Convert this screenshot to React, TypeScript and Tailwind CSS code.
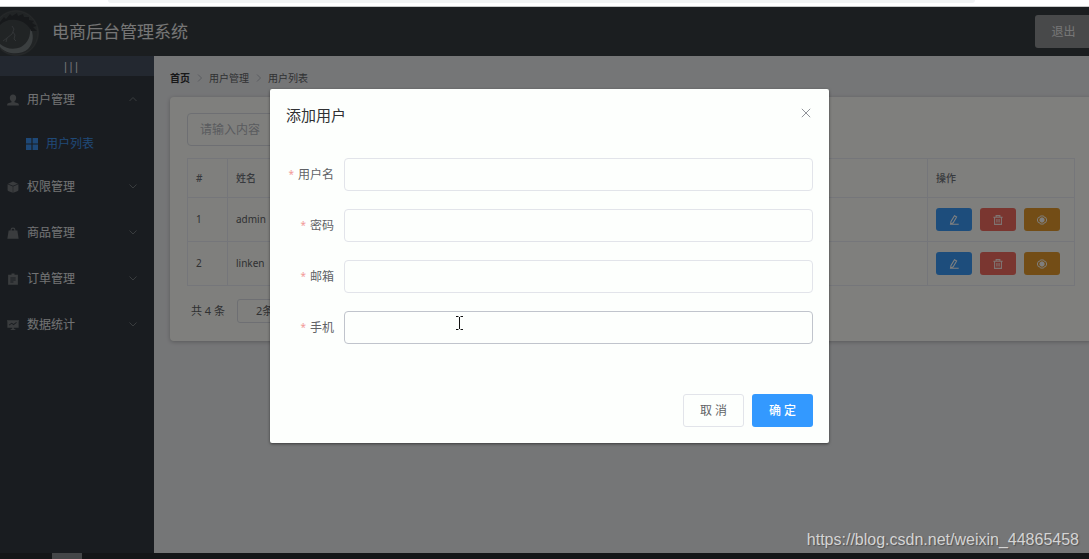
import type { ReactNode } from "react";

const font = "font-['Noto_Sans','Noto_Sans_CJK_SC',sans-serif]";

function Logo() {
  return (
    <svg className="h-12 w-10 shrink-0" viewBox="0 0 40 48" aria-hidden="true">
      <circle cx="16" cy="25" r="23" fill="#43484b" />
      <circle cx="16" cy="25" r="22" fill="none" stroke="#4d5254" strokeWidth="1" />
      <path
        d="M0 39 C6 46 20 48 28 41 C34 35 34 26 30 19 C31 28 28 35 21 39 C14 42 6 41 0 36 Z"
        fill="#777e81"
      />
      <path
        d="M0 14 L4 9 L6 11 L10 6 L12 8 L17 5 L18 8 L23 6 L24 9 L29 9 L29 12 L34 13 L32 15 L37 18 L33 19 L37 23 L31 23 C29 17 23 13 16 12 C9 11 4 13 0 17 Z"
        fill="#2e3336"
      />
      <path
        d="M3 33 L7 30 L12 26 L14 21 L12 18 M13 24 L15 27 L14 31 L16 33 M7 30 L6 34"
        fill="none"
        stroke="#656b6e"
        strokeWidth="1"
      />
    </svg>
  );
}

const menuIcons: Record<string, ReactNode> = {
  user: (
    <path d="M8 .5C5.400.5 3.800 2.300 3.800 5C3.800 7.200 4.800 9 6 9.800V11L1.500 12.400C.7 12.700.2 13.300.2 14.200V15.300H15.800V14.200C15.800 13.300 15.300 12.700 14.500 12.400L10 11V9.800C11.200 9 12.200 7.200 12.200 5C12.200 2.300 10.600.5 8 .5Z" />
  ),
  box: (
    <path d="M8 .7L14.600 3.500L8 6.400L1.400 3.500ZM.8 4.200L7.700 7.200V15.600L2.400 13.800C1.300 13.400.8 12.800.8 11.900ZM15.200 4.200L8.300 7.200V15.600L13.600 13.800C14.700 13.400 15.200 12.800 15.200 11.900Z" />
  ),
  bag: (
    <path
      fillRule="evenodd"
      d="M4.700 4.500V4A3.300 3.300 0 0 1 11.300 4V4.500H13.800L15.500 15.500H.5L2.200 4.500ZM6.200 4.500H9.800V4A1.800 1.800 0 0 0 6.200 4Z"
    />
  ),
  list: (
    <path
      fillRule="evenodd"
      d="M6 .5H10V2.300H14.500V15.700H1.500V2.300H6ZM4.500 6V7.200H11.500V6ZM4.500 8.700V9.900H11.500V8.700ZM4.500 11.400V12.600H8.500V11.400Z"
    />
  ),
  chart: (
    <path
      fillRule="evenodd"
      d="M0 1.500H16V3H15.500V11.500H9V12.700L12 14.500H4L7 12.700V11.500H.5V3H0ZM3 8.600L6.300 6.200L8.700 8.200L13 5L12.400 4.100L8.700 6.800L6.300 4.900L2.400 7.700Z"
    />
  ),
};

function Chevron({ up = false }: { up?: boolean }) {
  return (
    <svg className="h-2 w-2" viewBox="0 0 8 8" fill="none" stroke="#72787c" aria-hidden="true">
      <path d={up ? "M.5 5L4 1.500L7.500 5" : "M.5 1.500L4 5L7.500 1.500"} />
    </svg>
  );
}

function MenuItem({ icon, label, open = false }: { icon: string; label: string; open?: boolean }) {
  return (
    <button
      type="button"
      aria-expanded={open}
      className="flex h-[46px] w-full items-center pr-[17px] pl-[7px] text-xs text-[#e4e6e8]"
    >
      <svg className="mr-2 h-3 w-3" viewBox="0 0 16 16" fill="#74787c" aria-hidden="true">
        {menuIcons[icon]}
      </svg>
      <span className="flex-1 text-left">{label}</span>
      <Chevron up={open} />
    </button>
  );
}

function Sidebar() {
  return (
    <aside className="w-[154px] shrink-0 bg-[#333941]">
      <button
        type="button"
        className="flex h-5 w-full items-center justify-center bg-[#465061] pr-3 text-[10px] text-white"
      >
        |||
      </button>
      <nav className="pt-px">
        <MenuItem icon="user" label="用户管理" open />
        <a href="#users" className="flex h-[41px] items-center pl-[26px] text-xs text-[#3f92ee]">
          <svg className="mr-2 h-3 w-3" viewBox="0 0 12 12" fill="#3c91ee" aria-hidden="true">
            <path d="M0 0H5.400V5.400H0ZM6.600 0H12V5.400H6.600ZM0 6.600H5.400V12H0ZM6.600 6.600H12V12H6.600Z" />
          </svg>
          用户列表
        </a>
        <MenuItem icon="box" label="权限管理" />
        <MenuItem icon="bag" label="商品管理" />
        <MenuItem icon="list" label="订单管理" />
        <MenuItem icon="chart" label="数据统计" />
      </nav>
    </aside>
  );
}

function Separator() {
  return (
    <svg className="h-2 w-[19px]" viewBox="0 0 19 8" fill="none" stroke="#b4b8c0" aria-hidden="true">
      <path d="M8 .5L11.500 4L8 7.500" />
    </svg>
  );
}

function RowActions() {
  const base = "flex h-[23px] w-9 items-center justify-center rounded-[3px]";
  const svg = "h-[10px] w-[10px]";
  return (
    <div className="flex gap-2">
      <button type="button" aria-label="编辑" className={`${base} bg-[#3b9bf8]`}>
        <svg className={svg} viewBox="0 0 16 16" fill="none" stroke="#fff" strokeWidth="1.700">
          <path d="M8.800 1.200L12.200 3.200L6.700 12.400L2.500 14.300L3.200 10.400ZM2.500 14.700H15.500" />
        </svg>
      </button>
      <button type="button" aria-label="删除" className={`${base} bg-[#f56c60]`}>
        <svg className={svg} viewBox="0 0 16 16" fill="none" stroke="#ffe9e4" strokeWidth="1.700">
          <path d="M.5 3.500H15.500M5 3.500V1H11V3.500M2.500 3.500V15H13.500V3.500M6.300 6.500V12M9.700 6.500V12" />
        </svg>
      </button>
      <button type="button" aria-label="设置" className={`${base} bg-[#e69b2c]`}>
        <svg className={svg} viewBox="0 0 16 16" fill="none" stroke="#fff" strokeWidth="1.500">
          <path d="M5.500 1.500H10.500L11.500 3.500L14 4L15.500 8L14 12L11.500 12.500L10.500 14.500H5.500L4.500 12.500L2 12L.5 8L2 4L4.500 3.500Z" />
          <circle cx="8" cy="8" r="3.500" fill="#fff" />
        </svg>
      </button>
    </div>
  );
}

function UserTable() {
  const cell = "border border-[#ebecf4] px-2 text-left";
  return (
    <table className="mt-3 w-full table-fixed border-collapse text-[10px] text-[#606266]">
      <thead>
        <tr className="h-[39px] text-[#70747c]">
          <th className={`${cell} w-10 font-medium`}>#</th>
          <th className={`${cell} font-medium`}>姓名</th>
          <th className={`${cell} w-[147px] font-medium`}>操作</th>
        </tr>
      </thead>
      <tbody>
        {["admin", "linken"].map((name, i) => (
          <tr key={name} className="h-11">
            <td className={cell}>{i + 1}</td>
            <td className={cell}>{name}</td>
            <td className={cell}>
              <RowActions />
            </td>
          </tr>
        ))}
      </tbody>
    </table>
  );
}

function Content() {
  return (
    <main className="min-w-0 flex-1 bg-[#ebecef] pl-4">
      <nav className="flex h-[41px] items-center pt-[3px] text-[10px] text-[#606266]">
        <a href="#home" className="font-bold text-[#303133]">
          首页
        </a>
        <Separator />
        <span>用户管理</span>
        <Separator />
        <span>用户列表</span>
      </nav>
      <section className="-mr-[3px] rounded bg-[#fffffa] px-[17px] py-4 shadow-[0_1px_4px_rgba(0,0,0,0.25)]">
        <input
          aria-label="搜索"
          placeholder="请输入内容"
          className="block h-[33px] w-[300px] rounded border border-[#dcdfe6] px-3 text-xs placeholder:text-[#b4b7be]"
        />
        <UserTable />
        <div className="mt-[11px] flex h-7 items-center text-[11px] text-[#606266]">
          <span className="w-[50px] pl-1">共 4 条</span>
          <select
            aria-label="每页条数"
            className="h-6 w-[90px] appearance-none rounded-[3px] border border-[#dcdfe6] pl-[18px]"
          >
            <option>2条/页</option>
            <option>5条/页</option>
          </select>
        </div>
      </section>
    </main>
  );
}

const fields = [
  { id: "username", label: "用户名" },
  { id: "password", label: "密码" },
  { id: "email", label: "邮箱" },
  { id: "mobile", label: "手机", active: true },
];

function AddUserDialog() {
  return (
    <div
      role="dialog"
      aria-labelledby="dialog-title"
      className="h-fit w-full max-w-[559px] rounded-[2px] bg-[#fdfffd] px-4 pb-4 shadow-[0_1px_3px_rgba(0,0,0,0.5)]"
    >
      <header className="flex h-[53px] items-center justify-between">
        <h2 id="dialog-title" className="text-[15px] text-[#303133]">
          添加用户
        </h2>
        <button type="button" aria-label="关闭" className="mb-[6px] p-[2px]">
          <svg className="h-[10px] w-[10px]" viewBox="0 0 10 10" fill="none" stroke="#909399">
            <path d="M.8.8L9.200 9.200M9.200.8L.8 9.200" />
          </svg>
        </button>
      </header>
      <form className="flex flex-col gap-[18px] pt-4">
        {fields.map((f) => (
          <div key={f.id} className="flex items-center">
            <label
              htmlFor={f.id}
              className="flex w-[58px] items-center justify-end gap-1 pr-[10px] text-xs whitespace-nowrap text-[#606266]"
            >
              <span className="text-[10px] text-[#f29a98]">*</span>
              {f.label}
            </label>
            <input
              id={f.id}
              type={f.id === "password" ? "password" : "text"}
              className={`h-[33px] min-w-0 flex-1 rounded border bg-transparent px-3 text-xs outline-none ${
                f.active ? "border-[#c0c4cc]" : "border-[#e2e4ea]"
              }`}
            />
          </div>
        ))}
      </form>
      <footer className="mt-[50px] flex justify-end gap-2 text-xs">
        <button type="button" className="h-[33px] w-[61px] rounded-[3px] border border-[#e2e4ea] text-[#606266]">
          取 消
        </button>
        <button type="button" className="h-[33px] w-[61px] rounded-[3px] bg-[#3399ff] font-medium text-white">
          确 定
        </button>
      </footer>
    </div>
  );
}

export default function App() {
  return (
    <div className={`flex h-screen flex-col overflow-hidden bg-white ${font}`}>
      <div className="h-[7px] shrink-0 border-b border-[#c8caca] pr-[114px] pl-[108px]">
        <div className="h-[3px] rounded-b bg-[#f1f3f4]" />
      </div>
      <div className="relative flex min-h-0 flex-1 flex-col">
        <header className="flex h-[49px] shrink-0 items-center bg-[#373d40]">
          <Logo />
          <h1 className="ml-3 flex-1 text-[17px] text-[#ececec]">电商后台管理系统</h1>
          <button
            type="button"
            className="-mr-[3px] h-[33px] w-[57px] rounded-[3px] bg-[#909294] text-xs text-[#ececec]"
          >
            退出
          </button>
        </header>
        <div className="flex min-h-0 flex-1">
          <Sidebar />
          <Content />
        </div>
        <div className="absolute inset-0 flex justify-center bg-black/50 pt-[82px] pl-[10px]">
          <AddUserDialog />
        </div>
        <svg
          className="absolute top-[309px] left-[455px] h-[14px] w-2"
          viewBox="0 0 8 14"
          fill="none"
          stroke="#111"
          aria-hidden="true"
        >
          <path d="M1 .5H3.500M5.500 .5H8M1 13.500H3.500M5.500 13.500H8M4.500 1V13" />
        </svg>
        <p className="absolute right-[10px] bottom-0 font-['Liberation_Sans',sans-serif] text-base leading-[26px] text-[#d4d4d4] [text-shadow:1px_1px_1px_rgba(60,60,60,0.6)]">
          https://blog.csdn.net/weixin_44865458
        </p>
      </div>
      <div className="h-[6px] shrink-0 bg-[#141618] pl-[52px]">
        <div className="h-full w-[30px] bg-[#444648]" />
      </div>
    </div>
  );
}
